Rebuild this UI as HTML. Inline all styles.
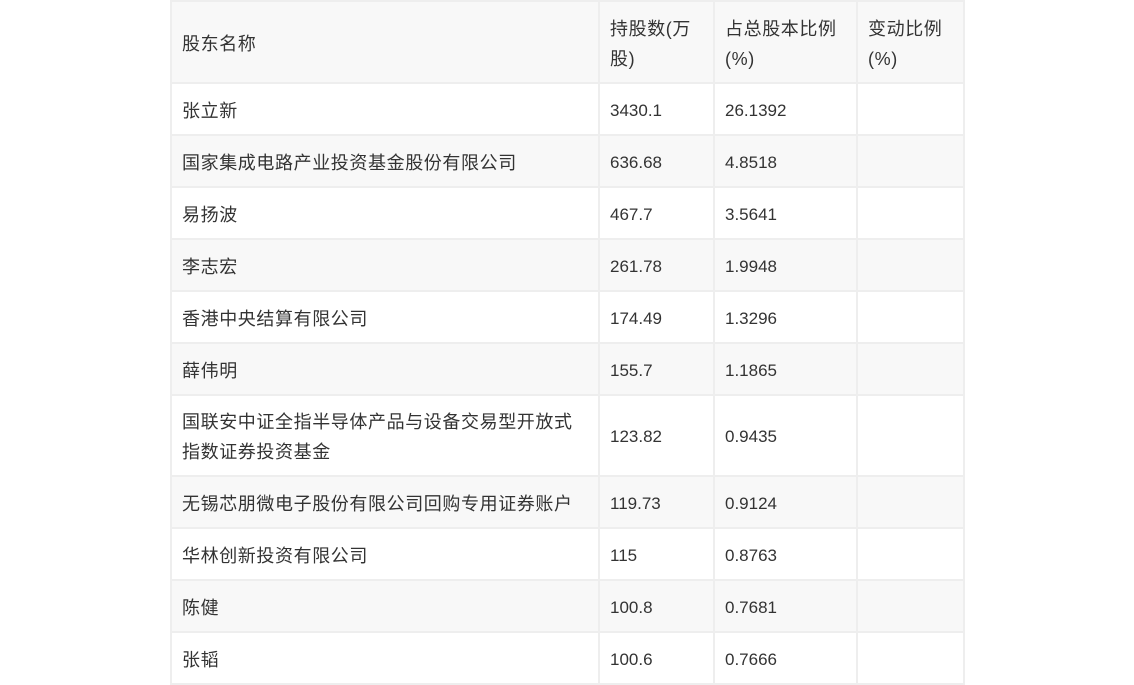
<!DOCTYPE html>
<html><head><meta charset="utf-8"><style>
body{margin:0;background:#fff;width:1134px;height:684px;overflow:hidden;font-family:"Liberation Sans","Noto Sans CJK SC",sans-serif;color:#333;}
table{position:absolute;left:170px;top:0;border-collapse:collapse;table-layout:fixed;width:793px;font-size:17px;}
td{border:2px solid #eeeeee;padding:3px 10px 0 10px;vertical-align:middle;line-height:30px;}
td.c{letter-spacing:0.6px;font-size:18px;}
tr:nth-child(odd) td{background:#f8f8f8;}
tr:nth-child(even) td{background:#fff;}
</style></head><body>
<table>
<colgroup><col style="width:428px"><col style="width:115px"><col style="width:143px"><col style="width:107px"></colgroup>
<tr style="height:82px"><td class="c">股东名称</td><td class="c">持股数(万股)</td><td class="c">占总股本比例(%)</td><td class="c">变动比例(%)</td></tr>
<tr style="height:52px"><td class="c">张立新</td><td>3430.1</td><td>26.1392</td><td></td></tr>
<tr style="height:52px"><td class="c">国家集成电路产业投资基金股份有限公司</td><td>636.68</td><td>4.8518</td><td></td></tr>
<tr style="height:52px"><td class="c">易扬波</td><td>467.7</td><td>3.5641</td><td></td></tr>
<tr style="height:52px"><td class="c">李志宏</td><td>261.78</td><td>1.9948</td><td></td></tr>
<tr style="height:52px"><td class="c">香港中央结算有限公司</td><td>174.49</td><td>1.3296</td><td></td></tr>
<tr style="height:52px"><td class="c">薛伟明</td><td>155.7</td><td>1.1865</td><td></td></tr>
<tr style="height:81px"><td class="c">国联安中证全指半导体产品与设备交易型开放式指数证券投资基金</td><td>123.82</td><td>0.9435</td><td></td></tr>
<tr style="height:52px"><td class="c">无锡芯朋微电子股份有限公司回购专用证券账户</td><td>119.73</td><td>0.9124</td><td></td></tr>
<tr style="height:52px"><td class="c">华林创新投资有限公司</td><td>115</td><td>0.8763</td><td></td></tr>
<tr style="height:52px"><td class="c">陈健</td><td>100.8</td><td>0.7681</td><td></td></tr>
<tr style="height:52px"><td class="c">张韬</td><td>100.6</td><td>0.7666</td><td></td></tr>
</table>
</body></html>
